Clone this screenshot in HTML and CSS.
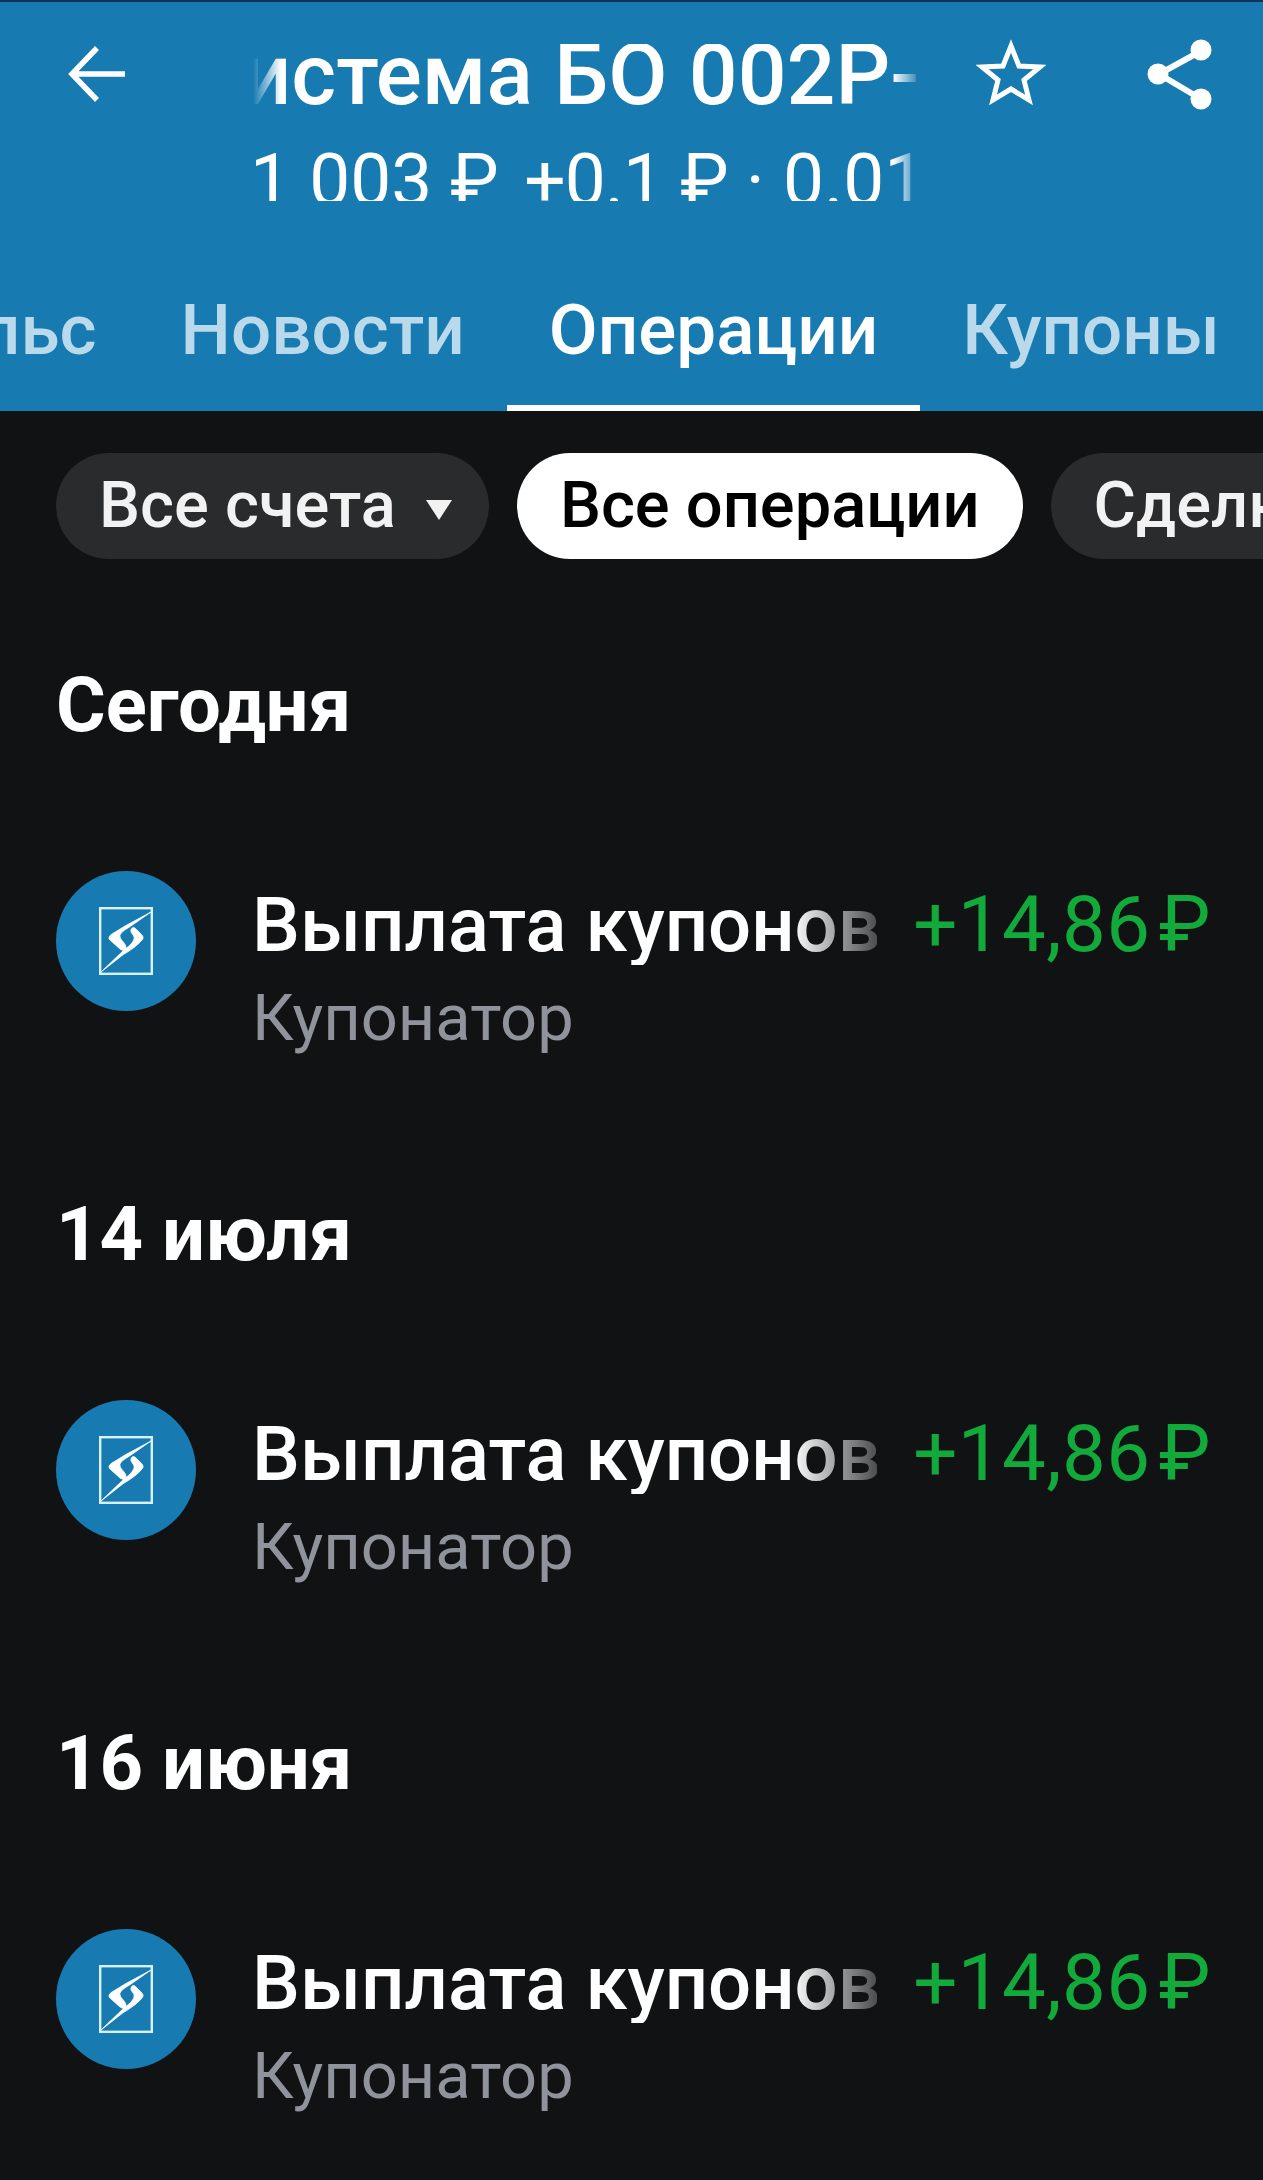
FILE: index.html
```html
<!DOCTYPE html>
<html lang="ru">
<head>
    <meta charset="UTF-8">
    <meta name="viewport" content="width=device-width, initial-scale=1.0">
    <title>Операции</title>
    <link rel="stylesheet" href="styles.css">
</head>
<body>
<svg class="defs" width="0" height="0">
    <symbol id="logo" viewBox="0 0 54 68">
        <rect x="1.2" y="1.2" width="51.6" height="65.6" fill="none" stroke="#d8f1fb" stroke-width="2.4"/>
        <path d="M52 5 L32 19 C26 23 20 26 21 30 C22 34 27 36 27 41 C27 44 24 44 21 42 L11 33 C9 31 10 29 13 27 L26 19 Z" fill="#fff" stroke="#fff" stroke-width="0.8"/>
        <path d="M2 65 L25 47 C31 44 40 37 43 33 C45 31 44 29 42 27 L37 22 C35 20 33 20 32 23 C31 26 36 28 35 32 C34 36 29 40 25 43 Z" fill="#fff" stroke="#fff" stroke-width="0.8"/>
    </symbol>
</svg>

<div class="header">
    <div class="topbar">
        <svg class="back" width="60" height="60" viewBox="0 0 60 60">
            <path d="M57 30 H5 M29 4 L4 30 L29 56" fill="none" stroke="#fff" stroke-width="5.5"/>
        </svg>
        <div class="titleBox">
            <div class="title"><span>Система БО 002Р-05</span></div>
            <div class="price"><span>1 003 ₽&nbsp;&hairsp;<b class="delta">+0.1 ₽</b> · 0.01%</span></div>
        </div>
        <svg class="star" width="70" height="68" viewBox="0 0 70 68">
            <path d="M35 7 L43 27 L64 28 L48 41 L53 61 L35 50 L17 61 L22 41 L6 28 L27 27Z" fill="none" stroke="#fff" stroke-width="5"/>
        </svg>
        <svg class="share" width="66" height="72" viewBox="0 0 66 72">
            <path d="M54 12 L12 35 L54 60" fill="none" stroke="#fff" stroke-width="6"/>
            <circle cx="54" cy="11" r="10.5" fill="#fff"/>
            <circle cx="11" cy="35" r="10.5" fill="#fff"/>
            <circle cx="54" cy="60" r="10.5" fill="#fff"/>
        </svg>
    </div>
    <div class="tabs">
        <div class="tab">Пульс</div>
        <div class="tab">Новости</div>
        <div class="tab active">Операции</div>
        <div class="tab">Купоны</div>
    </div>
</div>

<div class="filters">
    <div class="chip">Все счета<i class="caret"></i></div>
    <div class="chip selected">Все операции</div>
    <div class="chip">Сделки</div>
</div>

<div class="day">Сегодня</div>
<div class="row">
    <div class="logo"><svg width="54" height="68"><use href="#logo"/></svg></div>
    <div class="info">
        <div class="name">Выплата купонов</div>
        <div class="sub">Купонатор</div>
    </div>
    <div class="sum">+14,86&hairsp;₽</div>
</div>

<div class="day">14 июля</div>
<div class="row">
    <div class="logo"><svg width="54" height="68"><use href="#logo"/></svg></div>
    <div class="info">
        <div class="name">Выплата купонов</div>
        <div class="sub">Купонатор</div>
    </div>
    <div class="sum">+14,86&hairsp;₽</div>
</div>

<div class="day">16 июня</div>
<div class="row">
    <div class="logo"><svg width="54" height="68"><use href="#logo"/></svg></div>
    <div class="info">
        <div class="name">Выплата купонов</div>
        <div class="sub">Купонатор</div>
    </div>
    <div class="sum">+14,86&hairsp;₽</div>
</div>

</body>
</html>
```

FILE: styles.css
```css
html, body {
    margin: 0;
    height: 2180px;
    overflow: hidden;
}

body {
    background-color: #111213;
    color: #fff;
    font-family: Roboto, "Noto Sans", sans-serif;
}

.defs {
    display: block;
    height: 0;
}

.header {
    background-color: #177ab0;
    border-top: 2px solid #12305a;
    box-sizing: border-box;
    height: 411px;
    display: flex;
    flex-direction: column;
    overflow: hidden;
}

.topbar {
    display: flex;
    align-items: flex-start;
    height: 255px;
    padding-top: 42px;
    padding-left: 68px;
    box-sizing: border-box;
}

.back {
    flex: none;
}

.titleBox {
    flex: none;
    width: 670px;
    margin-left: 125px;
    overflow: hidden;
}

.title {
    font-size: 86px;
    font-weight: 500;
    line-height: 80px;
    height: 80px;
    margin-top: -9px;
    white-space: nowrap;
    -webkit-mask-image: linear-gradient(to right, transparent 0, #000 28px, #000 640px, transparent 668px);
    mask-image: linear-gradient(to right, transparent 0, #000 28px, #000 640px, transparent 668px);
}

.title span {
    display: inline-block;
    margin-left: -67px;
}

.price {
    font-size: 73px;
    line-height: 76px;
    height: 59px;
    overflow: hidden;
    margin-top: 27px;
    white-space: nowrap;
    -webkit-mask-image: linear-gradient(to right, #000 640px, transparent 668px);
    mask-image: linear-gradient(to right, #000 640px, transparent 668px);
}

.price span {
    display: inline-block;
    margin-left: -3px;
}

.delta {
    font-weight: 400;
    letter-spacing: -1px;
}

.star {
    flex: none;
    margin-left: 53px;
    margin-top: -5px;
}

.share {
    flex: none;
    margin-left: 101px;
    margin-top: -5px;
}

.tabs {
    display: flex;
    margin-left: -146px;
    flex: 1;
}

.tab {
    font-size: 71px;
    font-weight: 500;
    color: #bad9ea;
    padding: 35px 42px 0 42px;
    line-height: 76px;
    white-space: nowrap;
    box-sizing: border-box;
}

.tab.active {
    color: #fff;
    border-bottom: 6px solid #fff;
}

.filters {
    display: flex;
    gap: 28px;
    padding: 42px 0 0 56px;
    overflow: hidden;
    white-space: nowrap;
}

.chip {
    flex: none;
    height: 106px;
    line-height: 105px;
    border-radius: 53px;
    padding: 0 43px;
    background-color: #2a2b2c;
    font-size: 65px;
    font-weight: 500;
    color: #f2f2f2;
}

.chip.selected {
    background-color: #fff;
    color: #000;
}

.caret {
    display: inline-block;
    width: 0;
    height: 0;
    margin-left: 30px;
    margin-right: -6px;
    vertical-align: middle;
    border-left: 13px solid transparent;
    border-right: 13px solid transparent;
    border-top: 20px solid #f2f2f2;
}

.day {
    font-size: 76px;
    font-weight: 700;
    line-height: 80px;
    padding-left: 56px;
    height: 80px;
    margin-top: 106px;
}

.row {
    display: flex;
    align-items: flex-start;
    padding: 0 52px 0 56px;
    margin-top: 126px;
    margin-bottom: 183px;
    height: 140px;
}

.logo {
    flex: none;
    width: 140px;
    height: 140px;
    border-radius: 50%;
    background-color: #177ab0;
    display: flex;
    align-items: center;
    justify-content: center;
    margin-right: 56px;
}

.info {
    flex: none;
    width: 625px;
    overflow: hidden;
    white-space: nowrap;
}

.name {
    font-size: 76px;
    font-weight: 500;
    line-height: 80px;
    margin-top: 14px;
    -webkit-mask-image: linear-gradient(to right, #000 540px, rgba(0, 0, 0, 0.25) 625px);
    mask-image: linear-gradient(to right, #000 540px, rgba(0, 0, 0, 0.25) 625px);
}

.sub {
    font-size: 65px;
    line-height: 72px;
    color: #8f939b;
    margin-top: 17px;
}

.sum {
    flex: 1;
    text-align: right;
    font-size: 78px;
    letter-spacing: 0.4px;
    line-height: 80px;
    margin-top: 14px;
    color: #13aa3c;
    white-space: nowrap;
}
```
